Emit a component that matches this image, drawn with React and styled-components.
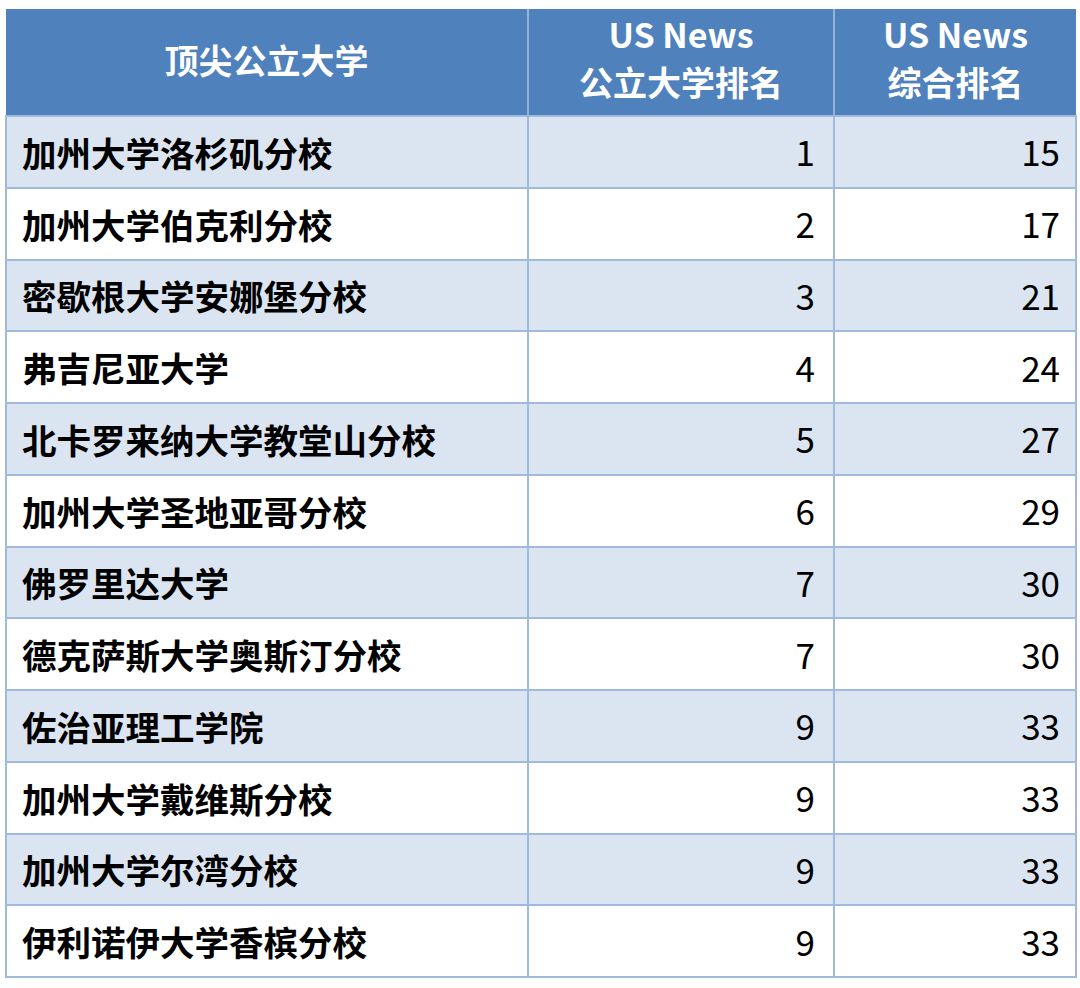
import React from 'react';
import styled, { createGlobalStyle } from 'styled-components';

const GlobalStyle = createGlobalStyle`
  html, body {
    margin: 0;
    padding: 0;
    background: #ffffff;
  }
  body {
    font-family: "Noto Sans CJK SC", "Noto Sans", sans-serif;
  }
`;

const rows = [
  ['加州大学洛杉矶分校', 1, 15],
  ['加州大学伯克利分校', 2, 17],
  ['密歇根大学安娜堡分校', 3, 21],
  ['弗吉尼亚大学', 4, 24],
  ['北卡罗来纳大学教堂山分校', 5, 27],
  ['加州大学圣地亚哥分校', 6, 29],
  ['佛罗里达大学', 7, 30],
  ['德克萨斯大学奥斯汀分校', 7, 30],
  ['佐治亚理工学院', 9, 33],
  ['加州大学戴维斯分校', 9, 33],
  ['加州大学尔湾分校', 9, 33],
  ['伊利诺伊大学香槟分校', 9, 33],
];

const Page = styled.div`
  padding: 9px 5px 0 5px;
`;

const Table = styled.table`
  width: 1070px;
  border-collapse: collapse;
  table-layout: fixed;
`;

const HeadRow = styled.tr`
  height: 107px;
  background: #4f81bd;
`;

const HeadCell = styled.th`
  padding: 0 0 9px 0;
  color: #ffffff;
  font-size: 34px;
  font-weight: 600;
  line-height: 48px;
  text-align: center;
  vertical-align: middle;
  border-left: 2px solid #95b3d7;
  &:first-child {
    border-left: none;
    padding-bottom: 4px;
  }
`;

const Row = styled.tr`
  height: 71.75px;
  background: ${(p) => (p.$shaded ? '#dbe5f1' : '#ffffff')};
`;

const NameCell = styled.td`
  padding: 0 0 0 15px;
  border: 2px solid #9fbadc;
  color: #000000;
  font-size: 34.5px;
  font-weight: 700;
  white-space: nowrap;
  vertical-align: middle;
`;

const NumCell = styled.td`
  padding: 0 ${(p) => p.$pad}px 2px 0;
  border: 2px solid #9fbadc;
  color: #000000;
  font-size: 35px;
  font-weight: 400;
  text-align: right;
  vertical-align: middle;
`;

export default function App() {
  return (
    <Page>
      <GlobalStyle />
      <Table>
        <colgroup>
          <col style={{ width: 522 }} />
          <col style={{ width: 306 }} />
          <col style={{ width: 242 }} />
        </colgroup>
        <thead>
          <HeadRow>
            <HeadCell>顶尖公立大学</HeadCell>
            <HeadCell>
              US News
              <br />
              公立大学排名
            </HeadCell>
            <HeadCell>
              US News
              <br />
              综合排名
            </HeadCell>
          </HeadRow>
        </thead>
        <tbody>
          {rows.map(([name, pub, overall], i) => (
            <Row key={name} $shaded={i % 2 === 0}>
              <NameCell>{name}</NameCell>
              <NumCell $pad={18}>{pub}</NumCell>
              <NumCell $pad={15}>{overall}</NumCell>
            </Row>
          ))}
        </tbody>
      </Table>
    </Page>
  );
}
